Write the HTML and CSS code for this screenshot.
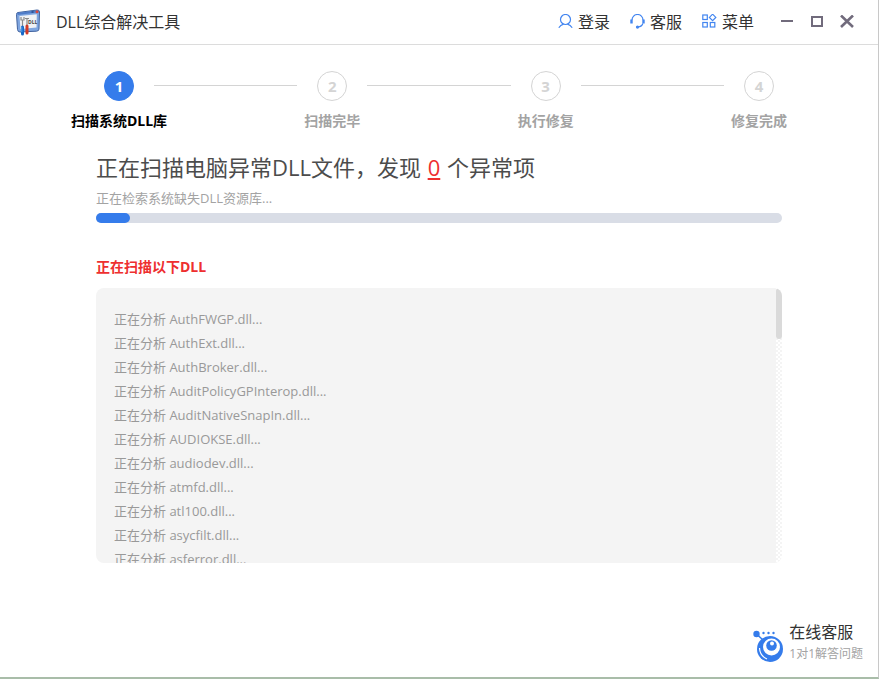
FILE: index.html
```html
<!DOCTYPE html>
<html lang="zh-CN">
<head>
    <meta charset="UTF-8">
    <title>DLL综合解决工具</title>
    <link rel="stylesheet" href="styles.css">
</head>
<body>
<div class="window">

    <header class="titlebar">
        <svg class="logo" width="26" height="28" viewBox="0 0 26 28">
            <path d="M3 4.500 L22 2 Q24.500 1.700 24.500 4 L24 21 Q24 23 21.500 23.200 L5 24 Q2.800 24 2.500 21.500 L1.500 6.500 Q1.500 4.700 3 4.500Z" fill="#7fa6e0" stroke="#41639f"/>
            <path d="M2.500 6 L24 3.200" stroke="#4f7cc8" stroke-width="2"/>
            <path d="M4.500 8 L21.800 6.200 L21.500 19.500 L5.500 21Z" fill="#f1f2f5"/>
            <path d="M16.500 4 h2" stroke="#27488a" stroke-width="1.500"/>
            <circle cx="22" cy="3.800" r="1.500" fill="#d9483b"/>
            <path d="M6 9 v3 h3 v-3 M7.500 12 v6 M12 11 v7 M10 10.500 h4" stroke="#8b8b8b" stroke-width="1.200" fill="none"/>
            <text x="13" y="15.500" class="logo-text">DLL</text>
            <path d="M7.500 19 v7" stroke="#1667c8" stroke-width="3" stroke-linecap="round"/>
            <path d="M12 18 v7" stroke="#d23a26" stroke-width="3" stroke-linecap="round"/>
            <path d="M6.800 19 v5" stroke="#52a4ef"/>
        </svg>
        <h1>DLL综合解决工具</h1>
        <nav class="menu">
            <a href="#">
                <svg width="16" height="16" viewBox="0 0 16 16">
                    <circle cx="7.500" cy="5.500" r="5"/>
                    <path d="M0.800 13.800 Q2.500 11 5.500 10.200 M9.500 10.200 Q12.500 11 14.200 13.800"/>
                </svg>登录
            </a>
            <a href="#">
                <svg width="16" height="16" viewBox="0 0 16 16">
                    <path d="M2 6 A5.500 5.500 0 0 1 13 6 M12.800 9.500 Q12 12.500 8 13"/>
                    <path d="M1.500 5.500 v4 M13.500 5.500 v4" stroke-width="2.400"/>
                    <circle cx="7.500" cy="13.100" r="1" class="fill"/>
                </svg>客服
            </a>
            <a href="#">
                <svg width="16" height="16" viewBox="0 0 16 16">
                    <rect x="0.800" y="1" width="4.500" height="4.500"/>
                    <rect x="0.800" y="8.500" width="4.500" height="4.500"/>
                    <rect x="8.300" y="8.500" width="4.500" height="4.500"/>
                    <path d="M10.600 0.200 L13.800 3.400 L10.600 6.600 L7.400 3.400Z"/>
                </svg>菜单
            </a>
        </nav>
        <div class="controls">
            <button type="button" aria-label="最小化">
                <svg width="14" height="14" viewBox="0 0 14 14"><path d="M1 6 h12"/></svg>
            </button>
            <button type="button" aria-label="最大化">
                <svg width="14" height="14" viewBox="0 0 14 14"><rect x="2" y="2" width="10" height="9"/></svg>
            </button>
            <button type="button" aria-label="关闭">
                <svg width="14" height="14" viewBox="0 0 14 14"><path d="M1 0.500 L13 12 M13 0.500 L1 12" stroke-width="2.600"/></svg>
            </button>
        </div>
    </header>

    <ol class="steps">
        <li class="step active"><span class="num">1</span><span class="label">扫描系统DLL库</span></li>
        <li class="line"></li>
        <li class="step"><span class="num">2</span><span class="label">扫描完毕</span></li>
        <li class="line"></li>
        <li class="step"><span class="num">3</span><span class="label">执行修复</span></li>
        <li class="line"></li>
        <li class="step"><span class="num">4</span><span class="label">修复完成</span></li>
    </ol>

    <main class="content">
        <h2>正在扫描电脑异常DLL文件，发现 <span class="count">0</span> 个异常项</h2>
        <p class="status">正在检索系统缺失DLL资源库...</p>
        <div class="progress"><div class="bar" style="width: 5%"></div></div>

        <h3>正在扫描以下DLL</h3>
        <div class="panel">
            <ul class="files">
                <li>正在分析 AuthFWGP.dll...</li>
                <li>正在分析 AuthExt.dll...</li>
                <li>正在分析 AuthBroker.dll...</li>
                <li>正在分析 AuditPolicyGPInterop.dll...</li>
                <li>正在分析 AuditNativeSnapIn.dll...</li>
                <li>正在分析 AUDIOKSE.dll...</li>
                <li>正在分析 audiodev.dll...</li>
                <li>正在分析 atmfd.dll...</li>
                <li>正在分析 atl100.dll...</li>
                <li>正在分析 asycfilt.dll...</li>
                <li>正在分析 asferror.dll...</li>
            </ul>
            <div class="scrollbar"><div class="thumb"></div></div>
        </div>
    </main>

    <footer class="footer">
        <a href="#" class="service">
            <svg width="32" height="36" viewBox="0 0 32 36">
                <path d="M3.500 5 L10 11" stroke="#357ceb" stroke-width="1.500"/>
                <circle cx="3.500" cy="5" r="3.200" fill="#357ceb"/>
                <circle cx="10.500" cy="4" r="1.200" fill="#357ceb"/>
                <circle cx="15.500" cy="4" r="1.200" fill="#357ceb"/>
                <circle cx="20.500" cy="4" r="1.200" fill="#357ceb"/>
                <circle cx="17" cy="20" r="13" fill="#357ceb"/>
                <circle cx="18.500" cy="18" r="8.500" fill="#fff"/>
                <circle cx="18.500" cy="16.500" r="5.300" fill="#357ceb"/>
                <circle cx="19" cy="14.500" r="2" fill="#fff"/>
                <path d="M6.500 19 Q7 27 14 30" stroke="#fff" stroke-width="1.200" fill="none"/>
            </svg>
            <span class="service-text">
                <span class="service-title">在线客服</span>
                <span class="service-desc">1对1解答问题</span>
            </span>
        </a>
    </footer>

</div>
</body>
</html>
```

FILE: styles.css
```css
* {
    box-sizing: border-box;
}

body {
    margin: 0;
    font-family: "Open Sans", "Noto Sans CJK SC", sans-serif;
    background-color: #fff;
    color: #333;
}

h1, h2, h3, p, ul, ol {
    margin: 0;
    padding: 0;
    font-weight: normal;
    list-style: none;
}

a {
    color: inherit;
    text-decoration: none;
}

.window {
    display: flex;
    flex-direction: column;
    height: 100vh;
    border-right: 1px solid #c8c8c8;
    border-bottom: 2px solid #a9bda9;
}

/* title bar */
.titlebar {
    display: flex;
    align-items: center;
    flex: none;
    height: 45px;
    padding: 0 24px 0 15px;
    border-bottom: 1px solid #dcdcdc;
}

.logo-text {
    font-size: 5px;
    font-weight: bold;
    fill: #444;
}

.titlebar h1 {
    margin-left: 15px;
    font-size: 16px;
    line-height: 24px;
}

.menu {
    display: flex;
    gap: 20px;
    margin-left: auto;
}

.menu a {
    display: flex;
    align-items: center;
    gap: 4px;
    font-size: 16px;
    line-height: 24px;
}

.menu svg {
    fill: none;
    stroke: #4285f0;
    stroke-width: 1.2;
}

.menu .fill {
    fill: #4285f0;
}

.controls {
    display: flex;
    gap: 16px;
    margin-left: 26px;
}

.controls button {
    display: flex;
    padding: 0;
    border: 0;
    background: none;
}

.controls svg {
    fill: none;
    stroke: #716b7c;
    stroke-width: 2;
}

/* steps */
.steps {
    display: flex;
    flex: none;
    padding: 26px 104px 0;
}

.step {
    display: flex;
    flex-direction: column;
    align-items: center;
    flex: none;
    width: 30px;
    color: #d4d4d4;
}

.num {
    width: 30px;
    height: 30px;
    border: 1px solid #d4d4d4;
    border-radius: 50%;
    font-size: 15px;
    font-weight: bold;
    line-height: 28px;
    text-align: center;
}

.label {
    margin-top: 10px;
    font-size: 14px;
    font-weight: bold;
    line-height: 20px;
    white-space: nowrap;
    color: #a3a3a3;
}

.active .num {
    border-color: #357ceb;
    background-color: #357ceb;
    color: #fff;
}

.active .label {
    color: #000;
}

.line {
    flex: 1;
    height: 1px;
    margin: 14px 20px 0;
    background-color: #d4d4d4;
}

/* scan result */
.content {
    display: flex;
    flex-direction: column;
    flex: 1;
    min-height: 0;
    padding: 19px 96px 0;
}

.content h2 {
    font-size: 22px;
    line-height: 34px;
    color: #4c4c4c;
}

.count {
    margin: 0 1px;
    color: #ee2f2f;
    text-decoration: underline;
}

.status {
    margin-top: 4px;
    font-size: 13px;
    line-height: 20px;
    color: #a3a3a3;
}

.progress {
    flex: none;
    height: 10px;
    margin-top: 5px;
    border-radius: 5px;
    background-color: #d9dde6;
}

.bar {
    height: 10px;
    border-radius: 5px;
    background-color: #357ceb;
}

.content h3 {
    margin-top: 34px;
    font-size: 14px;
    font-weight: bold;
    line-height: 20px;
    color: #ee2f2f;
}

.panel {
    display: flex;
    flex: 1;
    min-height: 0;
    margin-top: 11px;
    border-radius: 8px;
    overflow: hidden;
}

.files {
    flex: 1;
    padding: 19px 18px 0;
    background-color: #f4f4f4;
    font-size: 13px;
    line-height: 24px;
    color: #999;
}

.scrollbar {
    width: 6px;
    background: repeating-conic-gradient(#f4f4f4 0 25%, #fff 0 50%) 0 0 / 4px 4px;
}

.thumb {
    height: 51px;
    border-radius: 3px;
    background-color: #dadada;
}

/* online service */
.footer {
    display: flex;
    justify-content: flex-end;
    align-items: flex-end;
    flex: none;
    height: 114px;
    padding: 0 15px 12px;
}

.service {
    display: flex;
    align-items: flex-end;
    gap: 4px;
}

.service-text {
    display: flex;
    flex-direction: column;
}

.service-title {
    font-size: 16px;
    line-height: 22px;
}

.service-desc {
    font-size: 12px;
    line-height: 22px;
    color: #a3a3a3;
}
```
